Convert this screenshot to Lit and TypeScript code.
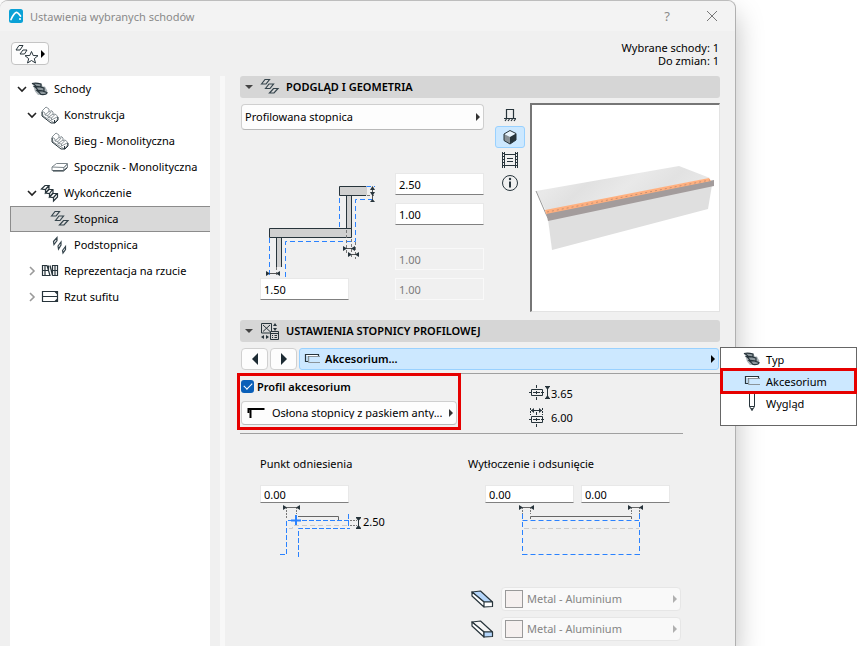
import { LitElement, html, svg, css, nothing } from "lit";
import { customElement, property, state } from "lit/decorators.js";
import { classMap } from "lit/directives/class-map.js";

const glyphs: Record<string, unknown> = {
  treads: svg`<path d="M1.500 7 5 2.500H9.500L6 7Z M5.500 11.500 9 7H13.500L10 11.500Z M9.500 16 13.500 11.500H18L14 16Z" fill="none" stroke="#35444c" stroke-width="1.200"/>`,
  stairs: svg`<path d="M2.500 4.500H11L13 7.500H15L17.500 12 14 16H8L5 12.500Z" fill="#aeb6ba"/>
    <path d="M2 4.500Q6 3.500 11 5V8H6Q5 5 2 4.500Z M4.500 7.500Q9 7 14 9V12H8Q7 9 4.500 7.500Z M7 11.500Q11 11 17 13.500 17 16 11 15.500 9 13 7 11.500Z" fill="#8f999e" stroke="#27343b" stroke-width="1.200"/>`,
  flight: svg`<g fill="#fff" stroke="#8b9499"><path d="M2 6 6 2 9 4V7L11.500 5.500 13 7V9.500L15 9 17.500 11V14L14.500 18 3 11Z"/>
    <path d="M2 6 5 8V10L9 6.500M5 10 8 10.500 11.500 6.500M8 10.500V12.500L13 9M8 12.500 11.500 13 15 9.500M11.500 13V15L17 12" fill="none"/>
    <path d="M2 7V11L11 18H15L18 15V12M14.500 15V18" fill="none" stroke="#27343b"/></g>`,
  slab: svg`<g fill="#fff" stroke="#7c868b"><path d="M2 10 6.500 6.500H17.500L14 10.500Z"/><path d="M2 10V13.500H13.500L14 10.500 17.500 7V10L13.500 13.500" fill="none"/><path d="M3 14H13.500L17.500 10.500" fill="none" stroke="#27343b"/></g>`,
  finish: svg`<g fill="none" stroke="#27343b" stroke-width="1.200"><path d="M1.500 6 5 2.500H9L5.500 6.500Z M5.500 6.500V10L9 6V2.500 M5.500 10 9 6.500H12.500L9.500 10.500Z M9.500 10.500V14L13 10V6.500 M9.500 14 13 10.500H17L13.500 14.500Z M13.500 14.500V18L17.500 14V10.500"/></g>`,
  risers: svg`<path d="M3.500 6.500 7 2.500V5.500L4 9.500Z M8 11 11 7V10L8.500 14Z M12.500 15.500 15.500 11.500V14.500L13 18Z" fill="none" stroke="#35444c" stroke-width="1.200"/>`,
  plan: svg`<path d="M2.500 4.500H7L10 14.500H2.500Z M5 4.500V14.500M8.500 4.500V9M2.500 9.500H8M10 4.500 12.500 14.500V4.500H17.500V14.500H12.500M15 4.500V14.500M12.500 9.500H17.500" fill="none" stroke="#27343b" stroke-width="1.200"/>`,
  ceiling: svg`<path d="M2.500 4.500H17.500V14.500H2.500Z M2.500 9.500H17.500M15 4.500 17.500 7M15 14.500 17.500 12" fill="none" stroke="#27343b" stroke-width="1.200"/>`,
  nosing: svg`<path d="M6.500 7V12.500H3.500V5.500H16.500V8" fill="none" stroke="#27343b" stroke-width="1.200"/><path d="M18 7.500H6.500V13.500H18" fill="none" stroke="#8b9499"/><path d="M4.500 6.500H15.500" stroke="#fff"/>`,
  pen: svg`<path d="M7.500 1V13.500L10 17.500 12.500 13.500V1M7.500 13.500H12.500" fill="none" stroke="#27343b"/><path d="m9 15 1 3 1-3Z" fill="#27343b"/>`,
  profile: svg`<path d="M2.500 15V12H1.500V6H17.500" fill="none" stroke="#fff" stroke-width="3"/><path d="M1.500 10V6H17.500" fill="none" stroke="#000" stroke-width="2"/><path d="M3.500 6V15" stroke="#000" stroke-width="2"/>`,
  elevation: svg`<path d="M6.500 14V5.500H13.500V14M4 14.500H16M5 17 6.500 15M8 17 9.500 15M11 17 12.500 15M14 17 15.500 15" fill="none" stroke="#27343b" stroke-width="1.200"/>`,
  cube: svg`<path d="M4 7 10 3.500 16 6.500 10 10Z" fill="#e8f4fd"/><path d="M4 7 10 10V17L4 13.500Z" fill="#8a9297"/><path d="M16 6.500V13L10 17V10Z" fill="#27343b"/><path d="M4 7 10 3.500 16 6.500V13L10 17 4 13.500Z" fill="none" stroke="#27343b"/>`,
  film: svg`<path d="M4.500 4.500H15.500V15.500H4.500M4.500 2V18M2.500 2V18M15.500 2V18M17.500 2V18M7 8.500H13M7 11.500H13" fill="none" stroke="#27343b"/><path d="M3.500 3V18M16.500 3V18" stroke="#27343b" stroke-width="2" stroke-dasharray="1 2"/>`,
  info: svg`<circle cx="10" cy="10" r="7.500" fill="none" stroke="#27343b"/><path d="M10 8.500V14.500" stroke="#27343b" stroke-width="2"/><circle cx="10" cy="6" r="1.200" fill="#27343b"/>`,
  settings: svg`<g fill="none" stroke="#27343b"><path d="M1.500 2.500H11.500V12H1.500Z M3 4 10 10.500M10 4 3 10.500"/><path d="M10.500 10.500H18.500V18.500H10.500Z" fill="#d6d6d6"/><path d="M10.500 12.500H18.500M12 14.500H13M14.500 14.500H17M12 16.500H13M14.500 16.500H17"/></g><path d="m13 5 2-3 2 3Zm0 2 2 3 2-3ZM4 14 1 16l3 2Zm2 0 3 2-3 2Z" fill="#27343b"/>`,
  height: svg`<g fill="none" stroke="#27343b"><path d="M3.500 6.500H14.500V12.500H3.500Z"/><path d="M1 9.500H17" stroke-dasharray="3 1"/><path d="M8.500 2V5M8.500 8V11M8.500 14V17"/><path d="M17 3.500H22M17 15.500H22M19.500 5V14"/></g><path d="m17.500 4h4l-2 3Zm0 11h4l-2-3Z" fill="#27343b"/>`,
  width: svg`<g fill="none" stroke="#27343b"><path d="M3.500 9.500H14.500V15.500H3.500Z"/><path d="M1 12.500H17" stroke-dasharray="3 1"/><path d="M8.500 5V8M8.500 11V14M8.500 17V20"/><path d="M2.500 1V8M14.500 1V8" stroke-dasharray="2 1"/><path d="M3 3.500H14"/></g><path d="m6 1-3 2.500L6 6Zm5 0 3 2.500L11 6Z" fill="#27343b"/>`,
  slabTop: svg`<g stroke="#27343b" stroke-width="1.200" stroke-linejoin="round"><path d="M1 3 9.500 2 21.500 13H13Z" fill="#b5d6fb"/><path d="M1 3V7L13 18V13Z M13 13H21.500V17.500L13 18Z" fill="#fff"/></g>`,
  slabFront: svg`<g stroke="#27343b" stroke-width="1.200" stroke-linejoin="round"><path d="M1 3 9.500 2 21.500 13H13Z" fill="#f5f5f5"/><path d="M1 3V7L13 18V13Z" fill="#fff"/><path d="M13 13H21.500V17.500L13 18Z" fill="#b5d6fb"/></g>`,
};

const icon = (name: string, w = 20, h = 20) =>
  html`<svg width=${w} height=${h} viewBox="0 0 ${w} ${h}" aria-hidden="true">${glyphs[name]}</svg>`;

const arrow = (cls = "arrow") =>
  html`<svg class=${cls} width="6" height="8" viewBox="0 0 6 8" aria-hidden="true"><path d="M1 0 5 4 1 8Z" fill="currentColor"/></svg>`;

/** Base rules shared by every element of the dialog. */
const base = css`
  * { box-sizing: border-box; }
  svg { display: block; flex: none; }
  button, input, select { font: inherit; color: inherit; margin: 0; border-radius: 0; }
  button { padding: 0; border: 0; background: none; display: flex; align-items: center; text-align: left; }
`;

interface Node { label: string; icon: string; level: number; open?: boolean; branch?: boolean; }

@customElement("stair-tree")
export class StairTree extends LitElement {
  @state() private selected = "Stopnica";
  private nodes: Node[] = [
    { label: "Schody", icon: "stairs", level: 0, branch: true, open: true },
    { label: "Konstrukcja", icon: "flight", level: 1, branch: true, open: true },
    { label: "Bieg - Monolityczna", icon: "flight", level: 2 },
    { label: "Spocznik - Monolityczna", icon: "slab", level: 2 },
    { label: "Wykończenie", icon: "finish", level: 1, branch: true, open: true },
    { label: "Stopnica", icon: "treads", level: 2 },
    { label: "Podstopnica", icon: "risers", level: 2 },
    { label: "Reprezentacja na rzucie", icon: "plan", level: 1, branch: true },
    { label: "Rzut sufitu", icon: "ceiling", level: 1, branch: true },
  ];
  static styles = [base, css`
    :host { display: block; background: #fff; }
    button { width: 100%; height: 26px; padding-left: 3px; border: 1px solid transparent; border-right: 0; white-space: nowrap; }
    .l1 { padding-left: 13px; }
    .l2 { padding-left: 23px; }
    .selected { background: #d9d9d9; border-color: #8c8c8c; }
    .chevron { width: 16px; flex: none; display: flex; justify-content: center; color: #9a9a9a; }
    .open { color: #222; }
    .label { margin-left: 4px; padding-bottom: 2px; }
  `];
  render() {
    return html`<div role="tree" aria-label="Schody">${this.nodes.map((n) => html`
      <button role="treeitem" aria-level=${n.level + 1} aria-selected=${n.label === this.selected}
        class=${classMap({ l1: n.level === 1, l2: n.level === 2, selected: n.label === this.selected })}
        @click=${() => (this.selected = n.label)}>
        <span class=${classMap({ chevron: true, open: !!n.open })}>${n.branch
          ? html`<svg width="10" height="10" viewBox="0 0 10 10"><path d=${n.open ? "M1 3 5 7 9 3" : "M3 1 7 5 3 9"} fill="none" stroke="currentColor" stroke-width="1.600"/></svg>`
          : nothing}</span>
        ${icon(n.icon)}<span class="label">${n.label}</span>
      </button>`)}</div>`;
  }
}

@customElement("value-field")
export class ValueField extends LitElement {
  @property() value = "";
  @property() name = "";
  @property({ type: Boolean }) disabled = false;
  static styles = [base, css`
    :host { display: block; width: 89px; }
    input { display: block; width: 100%; height: 22px; padding: 0 3px; background: #fff; border: 1px solid #e8e8e8; border-bottom-color: #808080; outline: none; }
    input:disabled { background: #f0f0f0; color: #7b7b7b; border-color: #f9f9f9; }
    :host([compact]) input { height: 18px; }
  `];
  render() {
    return html`<input type="text" aria-label=${this.name} .value=${this.value} ?disabled=${this.disabled} />`;
  }
}

@customElement("drop-down")
export class DropDown extends LitElement {
  @property() value = "";
  @property() name = "";
  @property() icon = "";
  @property({ type: Boolean }) swatch = false;
  @property({ type: Boolean }) disabled = false;
  static styles = [base, css`
    :host { display: block; }
    .box { height: 24px; display: flex; align-items: center; background: #fdfdfd; border: 1px solid #cfcfcf; border-bottom-color: #b8b8b8; border-radius: 4px; padding: 0 2px 0 3px; color: #000; }
    :host([tall]) .box { height: 26px; }
    .disabled { background: #f9f9f9; border-color: #e6e6e6; color: #858585; }
    select { flex: 1; min-width: 0; height: 100%; padding: 0 0 2px; border: 0; background: none; appearance: none; outline: none; text-overflow: ellipsis; opacity: 1; }
    .arrow { color: #333; margin-left: 2px; }
    .disabled .arrow { color: #b0b0b0; }
    .lead { margin: 0 5px 0 2px; }
    .swatch { width: 18px; height: 18px; flex: none; background: #f5f0ef; border: 1px solid #999; margin-right: 4px; }
  `];
  render() {
    return html`<div class=${classMap({ box: true, disabled: this.disabled })}>
      ${this.icon ? html`<span class="lead">${icon(this.icon)}</span>` : nothing}
      ${this.swatch ? html`<span class="swatch"></span>` : nothing}
      <select aria-label=${this.name} ?disabled=${this.disabled}><option>${this.value}</option></select>
      ${arrow()}
    </div>`;
  }
}

@customElement("section-title")
export class SectionTitle extends LitElement {
  @property() icon = "";
  @property() label = "";
  static styles = [base, css`
    :host { display: block; }
    button { width: 100%; height: 22px; padding-left: 5px; background: #d6d6d6; border-radius: 3px; font-weight: 600; white-space: nowrap; }
    .lead { margin: 0 6px 0 7px; }
    .label { padding-bottom: 2px; }
  `];
  render() {
    return html`<button aria-expanded="true">
      <svg width="8" height="6" viewBox="0 0 8 6" aria-hidden="true"><path d="M0 1H8L4 5Z" fill="#444"/></svg>
      <span class="lead">${icon(this.icon)}</span><span class="label">${this.label}</span></button>`;
  }
}

@customElement("app-root")
export class AppRoot extends LitElement {
  @state() private view = "cube";
  static styles = [base, css`
    :host { display: block; font: 11px/13px "Noto Sans", "Open Sans", sans-serif; color: #000; background: #fff; overflow: hidden; }
    .dialog { min-height: 100vh; margin-right: 129px; display: flex; flex-direction: column; background: #f0f0f0; border-top: 1px solid #bdbdbd; border-right: 1px solid #b0b0b0; border-radius: 8px 8px 0 0; box-shadow: 0 14px 28px rgba(0, 0, 0, 0.26); }
    .titlebar { height: 30px; display: flex; align-items: center; padding: 0 17px 0 9px; gap: 7px; background: #f3f3f3; border-radius: 8px 8px 0 0; color: #8a8a8a; }
    .titlebar h1 { flex: 1; margin: 0; font-size: 11px; font-weight: 400; }
    .titlebar button { font-size: 13px; margin-left: 24px; }
    .titlebar .help { margin: 0 5px 0 0; }
    .top { height: 45px; display: flex; justify-content: space-between; align-items: flex-start; padding: 11px 16px 0 11px; }
    .favorite { width: 38px; height: 23px; border: 1px solid #c4c4c4; border-radius: 4px; background: #fdfdfd; padding-left: 3px; }
    .status { text-align: right; margin-top: -1px; }
    .body { flex: 1; display: flex; padding: 0 15px 0 10px; }
    stair-tree { width: 200px; flex: none; }
    .splitter { width: 5px; background: #f8f8f8; margin: 0 15px 0 10px; flex: none; }
    main { flex: 1; min-width: 0; }
    .preview-section { display: flex; padding: 5px 0 8px; }
    .geometry { width: 244px; padding: 1px 0 0 1px; display: flex; flex-direction: column; }
    .sizes { flex: 1; display: flex; justify-content: space-between; align-items: flex-end; padding: 0 0 12px 19px; }
    .fields { display: flex; flex-direction: column; gap: 8px; }
    .fields .lower { display: flex; flex-direction: column; gap: 8px; margin-top: 15px; }
    .views { margin: 0 5px 0 11px; width: 30px; display: flex; flex-direction: column; gap: 1px; }
    .views button { height: 22px; justify-content: center; border: 1px solid transparent; border-radius: 3px; }
    .views .on { background: #cce8ff; border-color: #99d1ff; }
    .model { flex: 1; height: 209px; background: #fff; border: solid; border-width: 2px 1px 1px 2px; border-color: #767676 #e3e3e3 #e3e3e3 #767676; }
    .picker { position: relative; display: flex; gap: 2px; padding: 6px 1px 3px 1px; }
    .step { width: 27px; height: 22px; border: 1px solid #d0d0d0; border-radius: 4px; background: #fdfdfd; justify-content: center; }
    .page { flex: 1; height: 22px; padding: 0 2px; background: #cce8ff; border: 1px solid #99d1ff; border-radius: 3px; font-weight: 600; }
    .page span { flex: 1; margin-left: 3px; padding-bottom: 2px; }
    .menu { position: absolute; left: 100%; top: 5px; width: 137px; padding-bottom: 11px; background: #fff; border: 1px solid #666; }
    .menu button { width: 133px; height: 22px; margin: 0 1px; padding-left: 20px; gap: 4px; }
    .menu .current { background: #cce8ff; outline: 3px solid #e60000; outline-offset: -1px; }
    .accessory { display: flex; border-top: 1px solid #a0a0a0; }
    .highlight { width: 224px; height: 57px; margin: -1px 0 0 -3px; border: 3px solid #e60000; padding: 3px 1px 0 1px; }
    .tick { display: flex; align-items: center; gap: 3px; height: 15px; font-weight: 600; }
    .tick input { appearance: none; width: 13px; height: 13px; border-radius: 3px; background: #0a5fb8; display: grid; place-items: center; }
    .tick input::after { content: ""; width: 7px; height: 4px; border: solid #fff; border-width: 0 0 1px 1px; transform: rotate(-45deg) translate(1px, -1px); }
    .highlight drop-down { margin: 7px 0 0 0; }
    .measures { margin: 9px 0 0 67px; display: flex; flex-direction: column; gap: 4px; }
    .measures div { display: flex; align-items: center; height: 20px; }
    hr { height: 1px; border: 0; background: #a0a0a0; margin: 4px 37px 0 0; }
    .accessory + hr { margin-top: 3px; }
    .offsets { display: grid; grid-template-columns: 208px 1fr; padding: 23px 0 0 20px; }
    h2 { margin: 0 0 15px; font: inherit; }
    .pair { display: flex; gap: 7px; padding-left: 17px; }
    .drawing { display: flex; align-items: flex-start; }
    .drawing span { margin-top: 12px; }
    .push { margin-left: 50px; }
    .materials { display: flex; flex-direction: column; gap: 6px; padding: 28px 39px 6px 231px; }
    .material { display: flex; align-items: center; gap: 7px; }
    .material drop-down { flex: 1; }
  `];

  private geometryDrawing() {
    return html`<svg width="116" height="99" viewBox="0 0 116 99" role="img" aria-label="Geometria stopnicy">
      <g fill="none" stroke="#2a82ff" stroke-dasharray="5 3">
        <path d="M9.500 59V98M25.500 98V62.500H95.500V20.500H115M79.500 19V49M106 7.500H115"/></g>
      <path d="M16 57H21V88H16Z M86 16H91V50H86Z" fill="#d0d0d0"/>
      <path d="M16.500 57V88M21.500 57V88M86.500 16V50M91.500 16V50" stroke="#27343b"/>
      <path d="M79 7.500H107V16.500H79Z" fill="#d0d0d0"/>
      <path d="M106 7.500H79.500V16.500H106" fill="none" stroke="#27343b"/>
      <path d="M9.500 49.500H91.500V58.500H9.500Z" fill="#d0d0d0" stroke="#27343b"/>
      <path d="M86.500 51V76M91.500 60V80M95.500 63V80M107 16.500H114M16.500 88V96" stroke="#777" stroke-dasharray="3 2"/>
      <path d="M86 69.500H92M92 75.500H96M10 94.500H16M112.500 8V22" stroke="#555"/>
      <path d="m83 67 4 2.500-4 2.500Zm12 0-4 2.500 4 2.500ZM88 73l4 2.500-4 2.500Zm11 0-4 2.500 4 2.500ZM6 92l4 2.500L6 97Zm14 0-4 2.500 4 2.500ZM110 11h5l-2.500-4Zm0 2h5l-2.500 4Zm0 10h5l-2.500-3Z" fill="#27343b"/>
    </svg>`;
  }

  private model() {
    return html`<svg width="100%" height="206" viewBox="0 0 187 206" preserveAspectRatio="xMidYMid meet" role="img" aria-label="Podgląd 3D">
      <defs><linearGradient id="stone" x2="1" y2=".3"><stop offset="0" stop-color="#e2e2e2"/><stop offset=".2" stop-color="#e9e9e9"/>
        <stop offset=".38" stop-color="#e1e1e1"/><stop offset=".6" stop-color="#e9e9e9"/><stop offset=".8" stop-color="#e2e2e2"/><stop offset="1" stop-color="#e8e8e8"/></linearGradient></defs>
      <path d="M16 114 180 80 176 104 20 145Z" fill="#dfdfdf"/>
      <path d="M4 86 147 61 178 73 14 106Z" fill="url(#stone)"/>
      <path d="M4 86 14 109 16 113" fill="none" stroke="#999"/>
      <path d="M14 107 182 75V81L16 116Z" fill="#a39c9c"/>
      <path d="M13 105 177 73 179 76 14 109Z" fill="#ffb07f"/>
      <path d="M15 107 178 75" stroke="#c98f70" stroke-dasharray="2 3" fill="none"/>
    </svg>`;
  }

  render() {
    return html`<section class="dialog" role="dialog" aria-label="Ustawienia wybranych schodów">
      <header class="titlebar">
        <svg width="14" height="14" viewBox="0 0 14 14" aria-hidden="true"><rect width="14" height="14" rx="2.500" fill="#0aa1d6"/><path d="M2 10.500C5 4 6.500 3 8 3.500S9 4 11.500 7" fill="none" stroke="#fff" stroke-width="1.700" stroke-linecap="round"/><circle cx="11" cy="10" r="1" fill="#fff"/></svg>
        <h1>Ustawienia wybranych schodów</h1>
        <button class="help" aria-label="Pomoc">?</button>
        <button aria-label="Zamknij"><svg width="12" height="12" viewBox="0 0 12 12"><path d="M1 1 11 11M11 1 1 11" stroke="#777"/></svg></button>
      </header>
      <div class="top">
        <button class="favorite" aria-label="Ulubione">
          <svg width="25" height="21" viewBox="0 0 25 21"><path d="M1 7 4 2.500H8L5 7Z M5 11 8 7H12L9.500 11Z" fill="none" stroke="#27343b"/><path d="m16.500 8.500 1.700 4 4.800.2-3.700 3 1.200 4.300-4-2.500-4 2.500 1.200-4.300-3.700-3 4.800-.2Z" fill="#fdfdfd" stroke="#27343b"/></svg>
          ${arrow()}
        </button>
        <div class="status">Wybrane schody: 1<br />Do zmian: 1</div>
      </div>
      <div class="body">
        <stair-tree></stair-tree>
        <div class="splitter"></div>
        <main>
          <section-title icon="treads" label="PODGLĄD I GEOMETRIA"></section-title>
          <div class="preview-section">
            <div class="geometry">
              <drop-down tall name="Typ stopnicy" value="Profilowana stopnica"></drop-down>
              <div class="sizes">
                <div>${this.geometryDrawing()}<value-field name="Wysunięcie" value="1.50"></value-field></div>
                <div class="fields">
                  <value-field name="Grubość stopnicy" value="2.50"></value-field>
                  <value-field name="Odsunięcie" value="1.00"></value-field>
                  <div class="lower">
                    <value-field name="Grubość podstopnicy" value="1.00" disabled></value-field>
                    <value-field name="Odsunięcie podstopnicy" value="1.00" disabled></value-field>
                  </div>
                </div>
              </div>
            </div>
            <div class="views">${["elevation", "cube", "film", "info"].map((v) => html`
              <button aria-label=${v} class=${classMap({ on: v === this.view })} @click=${() => (this.view = v)}>${icon(v)}</button>`)}
            </div>
            <div class="model">${this.model()}</div>
          </div>

          <section-title icon="settings" label="USTAWIENIA STOPNICY PROFILOWEJ"></section-title>
          <div class="picker">
            <button class="step" aria-label="Poprzednia"><svg width="8" height="12" viewBox="0 0 8 12"><path d="M7 0V12L1 6Z" fill="#1d2b33"/></svg></button>
            <button class="step" aria-label="Następna"><svg width="8" height="12" viewBox="0 0 8 12"><path d="M1 0V12L7 6Z" fill="#1d2b33"/></svg></button>
            <button class="page" aria-haspopup="menu" aria-expanded="true">${icon("nosing")}<span>Akcesorium...</span>${arrow()}</button>
            <div class="menu" role="menu">
              <button role="menuitem">${icon("stairs")}Typ</button>
              <button role="menuitem" class="current">${icon("nosing")}Akcesorium</button>
              <button role="menuitem">${icon("pen")}Wygląd</button>
            </div>
          </div>
          <div class="accessory">
            <div class="highlight">
              <label class="tick"><input type="checkbox" checked />Profil akcesorium</label>
              <drop-down icon="profile" name="Profil akcesorium" value="Osłona stopnicy z paskiem anty..."></drop-down>
            </div>
            <div class="measures">
              <div>${icon("height", 23)}3.65</div>
              <div>${icon("width", 23)}6.00</div>
            </div>
          </div>
          <hr />
          <div class="offsets">
            <div>
              <h2>Punkt odniesienia</h2>
              <value-field compact name="Punkt odniesienia" value="0.00"></value-field>
              <div class="drawing">
                <svg width="103" height="56" viewBox="0 0 103 56" aria-hidden="true">
                  <g fill="none"><path d="M26.500 4V15M36.500 4V11" stroke="#777" stroke-dasharray="2 1"/><path d="M27 4.500H36M38 13.500H78.500V17" stroke="#666"/>
                  <path d="M29 25.500H32.500V22.500H90" stroke="#ccc" stroke-dasharray="5 3"/>
                  <path d="M20 51.500H26.500V17.500H89M88.500 11V25M38.500 54V25.500H90" stroke="#2a82ff" stroke-dasharray="5 2"/>
                  <path d="M31 17.500H41M36 12V22" stroke="#2a82ff" stroke-width="2"/><path d="M90 17.500H97M90 22.500H97" stroke="#777" stroke-dasharray="2 1"/><path d="M96 14.500H101M96 25.500H101M98.500 15V25" stroke="#27343b"/></g>
                  <path d="m23 2 4 2.500L23 7Zm17 0-4 2.500L40 7ZM96 15h5l-2.500 3Zm0 10h5l-2.500-3Z" fill="#27343b"/>
                </svg><span>2.50</span>
              </div>
            </div>
            <div>
              <h2>Wytłoczenie i odsunięcie</h2>
              <div class="pair">
                <value-field compact name="Wytłoczenie" value="0.00"></value-field>
                <value-field compact name="Odsunięcie" value="0.00"></value-field>
              </div>
              <svg class="push" width="126" height="56" viewBox="0 0 126 56" aria-hidden="true">
                <g fill="none"><path d="M4.500 4V11M12.500 4V11M113.500 4V11M121.500 4V11" stroke="#777" stroke-dasharray="2 1"/><path d="M5 4.500H12M114 4.500H121M12.500 16V13.500H113.500V16" stroke="#666"/>
                <path d="M6 25.500H121" stroke="#ccc" stroke-dasharray="5 3"/><path d="M4.500 11V52M121.500 11V52M4.500 17.500H121M4.500 51.500H121" stroke="#2a82ff" stroke-dasharray="5 3"/></g>
                <path d="m1 2 4 2.500L1 7Zm15 0-4 2.500L16 7Zm94 0 4 2.500-4 2.500Zm15 0-4 2.500 4 2.500Z" fill="#27343b"/>
              </svg>
            </div>
          </div>
          <div class="materials">
            <div class="material">${icon("slabTop", 23)}<drop-down swatch disabled name="Materiał górny" value="Metal - Aluminium"></drop-down></div>
            <div class="material">${icon("slabFront", 23)}<drop-down swatch disabled name="Materiał boczny" value="Metal - Aluminium"></drop-down></div>
          </div>
        </main>
      </div>
    </section>`;
  }
}
